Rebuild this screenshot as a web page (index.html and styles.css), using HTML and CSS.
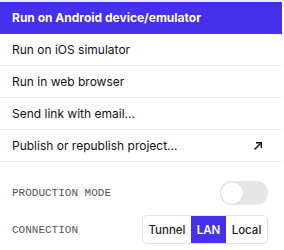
FILE: index.html
```html
<!DOCTYPE html>
<html>
<head>
<meta charset="utf-8">
<link rel="stylesheet" href="styles.css">
</head>
<body>
<div class="panel">
  <ul class="menu">
    <li class="item active">Run on Android device/emulator</li>
    <li class="item">Run on iOS simulator</li>
    <li class="item">Run in web browser</li>
    <li class="item">Send link with email...</li>
    <li class="item with-icon">
      <span>Publish or republish project...</span>
      <svg class="ext" width="10" height="10" viewBox="0 0 10 10"><path d="M1.5 8.5 L8 2" stroke="#111" stroke-width="1.4" fill="none"/><path d="M3 1.7 H8.3 V7" stroke="#111" stroke-width="1.4" fill="none"/></svg>
    </li>
  </ul>
  <div class="settings">
    <div class="row">
      <span class="label">Production mode</span>
      <span class="toggle"><span class="knob"></span></span>
    </div>
    <div class="row">
      <span class="label">Connection</span>
      <div class="segment">
        <span class="seg tunnel">Tunnel</span>
        <span class="seg lan on">LAN</span>
        <span class="seg local">Local</span>
      </div>
    </div>
  </div>
</div>
</body>
</html>
```
FILE: styles.css
```css
html, body {
  margin: 0;
  padding: 0;
  background: #fff;
}
body {
  font-family: Inter, "Noto Sans", sans-serif;
  color: #111;
  border-top: 2px solid #ededed;
}
.panel {
  width: 282px;
}
.menu {
  list-style: none;
  margin: 0;
  padding: 0;
}
.item {
  height: 31px;
  border-bottom: 1px solid #ebebeb;
  display: flex;
  align-items: center;
  padding: 0 12px;
  font-size: 12px;
  font-weight: 400;
}
.item.active {
  background: #4630eb;
  color: #fff;
  font-weight: 700;
  border-bottom-color: #4630eb;
}
.with-icon {
  justify-content: space-between;
  padding-right: 19px;
}
.settings {
  padding: 12px 14px 0 12px;
}
.row {
  height: 37px;
  display: flex;
  align-items: center;
  justify-content: space-between;
}
.label {
  font-family: "Liberation Mono", "DejaVu Sans Mono", monospace;
  font-size: 11px;
  text-transform: uppercase;
  color: #555;
}
.toggle {
  width: 48px;
  height: 24px;
  border-radius: 12px;
  background: #e6e6e6;
  position: relative;
}
.knob {
  position: absolute;
  left: 1px;
  top: 1px;
  width: 22px;
  height: 22px;
  border-radius: 50%;
  background: #fff;
  box-shadow: 0 0 1px rgba(0,0,0,0.25);
}
.segment {
  display: flex;
  height: 27px;
  border: 1px solid #e4e4e4;
  border-radius: 5px;
  overflow: hidden;
}
.seg {
  display: flex;
  align-items: center;
  justify-content: center;
  font-size: 11.5px;
  font-weight: 500;
  color: #222;
}
.tunnel { width: 48px; }
.lan { width: 35px; }
.local { width: 41px; }
.seg.on {
  background: #4630eb;
  color: #fff;
  font-weight: 600;
}
```
